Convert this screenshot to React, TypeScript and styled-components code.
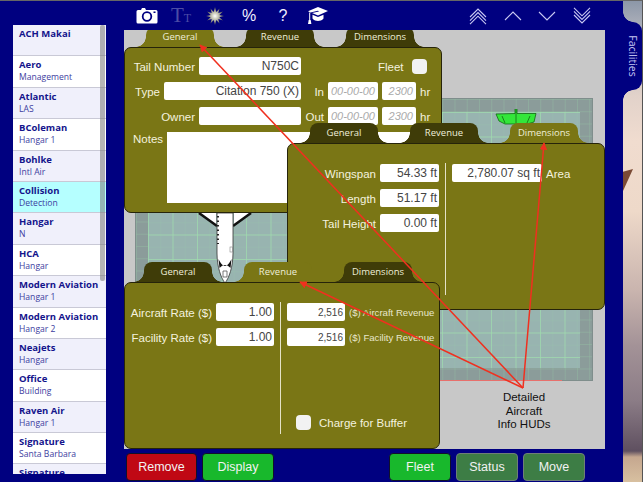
import React from "react";
import styled, { createGlobalStyle } from "styled-components";

const NAVY = "#000080";
const OLIVE = "#7a7615";
const DARK_TAB = "#3f3c08";

const GlobalStyle = createGlobalStyle`
  html, body {
    margin: 0;
    padding: 0;
    background: ${NAVY};
    overflow: hidden;
  }
  * {
    box-sizing: border-box;
  }
`;

interface IFacility {
  name: string;
  sub?: string;
  selected?: boolean;
}

const facilities: IFacility[] = [
  { name: "ACH Makai" },
  { name: "Aero", sub: "Management" },
  { name: "Atlantic", sub: "LAS" },
  { name: "BColeman", sub: "Hangar 1" },
  { name: "Bohlke", sub: "Intl Air" },
  { name: "Collision", sub: "Detection", selected: true },
  { name: "Hangar", sub: "N" },
  { name: "HCA", sub: "Hangar" },
  { name: "Modern Aviation", sub: "Hangar 1" },
  { name: "Modern Aviation", sub: "Hangar 2" },
  { name: "Neajets", sub: "Hangar" },
  { name: "Office", sub: "Building" },
  { name: "Raven Air", sub: "Hangar 1" },
  { name: "Signature", sub: "Santa Barbara" },
  { name: "Signature" },
];

const TAB_NAMES = ["General", "Revenue", "Dimensions"];

const Tabs = ({ active, left }: { active: string; left: number }): JSX.Element => (
  <TabRow $left={left}>
    {TAB_NAMES.map((name) => (
      <Tab key={name} $active={name === active}>
        {name}
      </Tab>
    ))}
  </TabRow>
);

const Chevrons = ({ count, up }: { count: number; up: boolean }): JSX.Element => (
  <svg width="18" height="18" viewBox="0 0 18 18" fill="none" stroke="#c9c9f2" strokeWidth="1.1">
    <g transform={up ? undefined : "matrix(1 0 0 -1 0 18)"}>
      {Array.from({ length: count }).map((_, i) => {
        const y = count === 1 ? 5 : 2 + i * 3.6;
        return <polyline key={i} points={`1,${y + 8} 9,${y} 17,${y + 8}`} />;
      })}
    </g>
  </svg>
);

const App = (): JSX.Element => {
  return (
    <Page>
      <GlobalStyle />
      <Main>
        <Sidebar>
          {facilities.map((f, i) => (
            <Item key={i} $odd={i % 2 === 1} $selected={!!f.selected}>
              <ItemName>{f.name}</ItemName>
              <ItemSub>{f.sub}</ItemSub>
            </Item>
          ))}
          <ScrollThumb />
        </Sidebar>

        <Content>
          <Toolbar>
            <ToolGroup>
              <ToolSlot>
                <svg width="22" height="17" viewBox="0 0 22 17">
                  <path
                    d="M2 3h3l1-2h3l1 2h10a1.500 1.500 0 0 1 1.500 1.500v10.500a1.500 1.500 0 0 1-1.500 1.500h-18a1.500 1.500 0 0 1-1.500-1.500v-10.500a1.500 1.500 0 0 1 1.500-1.500z"
                    fill="#fff"
                  />
                  <circle cx="11" cy="9.500" r="4.300" fill="none" stroke={NAVY} strokeWidth="1.800" />
                  <rect x="17.500" y="4.500" width="2" height="1.500" fill={NAVY} />
                </svg>
              </ToolSlot>
              <ToolSlot>
                <FontGlyph>
                  T<small>T</small>
                </FontGlyph>
              </ToolSlot>
              <ToolSlot>
                <svg width="18" height="18" viewBox="0 0 18 18">
                  <defs>
                    <radialGradient id="burst">
                      <stop offset="0" stopColor="#ffffff" />
                      <stop offset="0.3" stopColor="#d2d2c4" />
                      <stop offset="1" stopColor="#5c5a4c" />
                    </radialGradient>
                  </defs>
                  <polygon
                    fill="url(#burst)"
                    points="9,0 10.300,5 13.500,1.500 12.300,6 17,4.500 13.300,8 18,9 13.300,10.200 17,13.500 12.300,12 13.500,16.500 10.300,13 9,18 7.700,13 4.500,16.500 5.700,12 1,13.500 4.700,10.200 0,9 4.700,8 1,4.500 5.700,6 4.500,1.500 7.700,5"
                  />
                </svg>
              </ToolSlot>
              <ToolSlot>%</ToolSlot>
              <ToolSlot>?</ToolSlot>
              <ToolSlot>
                <svg width="21" height="19" viewBox="0 0 21 19" fill="#fff">
                  <polygon points="11,1 21,5 11,9.500 5,7 12,5.500 11,4.800 3.500,6.400 1,5.300" />
                  <path d="M5.500 8.700l5.500 2.400 5.500-2.400v3.800c-1.500 1.800-3.500 2.500-5.500 2.500s-4-0.700-5.500-2.500z" />
                  <rect x="2.200" y="6.500" width="1" height="7.500" />
                  <path d="M1.700 14h2l0.700 4h-3.400z" />
                </svg>
              </ToolSlot>
            </ToolGroup>
            <ToolGroup>
              <ToolSlot $wide>
                <Chevrons count={3} up />
              </ToolSlot>
              <ToolSlot $wide>
                <Chevrons count={1} up />
              </ToolSlot>
              <ToolSlot $wide>
                <Chevrons count={1} up={false} />
              </ToolSlot>
              <ToolSlot $wide>
                <Chevrons count={3} up={false} />
              </ToolSlot>
            </ToolGroup>
          </Toolbar>

          <Canvas>
            <Floor>
              <FloorInner />
              <FloorRedLine />
            </Floor>

            <WhitePlane width="70" height="75" viewBox="0 0 70 75">
              <polygon points="8,0 25,13 25,0" fill="#fff" />
              <polygon points="60,0 43,13 43,0" fill="#fff" />
              <path d="M8 0l18 13M60 0l-18 13" stroke="#111" strokeWidth="2.500" fill="none" />
              <path d="M26 0v40c0 14 4 25 8 30c4-5 8-16 8-30v-40z" fill="#fff" stroke="#333" strokeWidth="0.800" />
              <path d="M27 3v28" stroke="#111" strokeWidth="1.800" strokeDasharray="1.500 3" />
              <path d="M27.500 46c2 4 4 7 6.500 7s4.500-3 6.500-7l-1 9c-2-2-3.500-3-5.500-3s-3.500 1-5.500 3z" fill="#111" />
              <rect x="39" y="34" width="2.500" height="5" fill="none" stroke="#888" strokeWidth="0.600" />
              <path d="M32 58h4v6h-4z" fill="none" stroke="#555" strokeWidth="0.800" />
            </WhitePlane>

            <GreenPlane width="44" height="16" viewBox="0 0 44 16">
              <polygon
                points="1,5 20,4.500 20,0 22,0 22,4.500 41,4.500 39,13 32,15 10,15 4,12"
                fill="#33e63a"
                stroke="#126a12"
                strokeWidth="0.800"
              />
              <path d="M21 1v13M7 7l3 7M35 7l-3 7" stroke="#126a12" strokeWidth="0.800" />
            </GreenPlane>

            <Hud $left={0} $top={-3} $width={318}>
              <Tabs active="General" left={22} />
              <Panel $height={166} $column>
                <GeneralRow>
                  <LeftField>
                    <Label>Tail Number</Label>
                    <Input $width={102}>N750C</Input>
                  </LeftField>
                  <FleetField>
                    <Label>Fleet</Label>
                    <Check />
                  </FleetField>
                </GeneralRow>
                <GeneralRow>
                  <LeftField>
                    <Label>Type</Label>
                    <Input $width={137}>Citation 750 (X)</Input>
                  </LeftField>
                  <DateField>
                    <DateLabel>In</DateLabel>
                    <Input $width={50} $hint>
                      00-00-00
                    </Input>
                    <Input $width={34} $hint>
                      2300
                    </Input>
                    <Label>hr</Label>
                  </DateField>
                </GeneralRow>
                <GeneralRow>
                  <LeftField>
                    <Label>Owner</Label>
                    <Input $width={102} />
                  </LeftField>
                  <DateField>
                    <DateLabel>Out</DateLabel>
                    <Input $width={50} $hint>
                      00-00-00
                    </Input>
                    <Input $width={34} $hint>
                      2300
                    </Input>
                    <Label>hr</Label>
                  </DateField>
                </GeneralRow>
                <NotesRow>
                  <Label>Notes</Label>
                  <NotesBox />
                </NotesRow>
              </Panel>
            </Hud>

            <Hud $left={163} $top={93} $width={318}>
              <Tabs active="Dimensions" left={23} />
              <Panel $height={167}>
                <Column $width={151}>
                  <Field>
                    <Label>Wingspan</Label>
                    <Input $width={59}>54.33 ft</Input>
                  </Field>
                  <Field>
                    <Label>Length</Label>
                    <Input $width={59}>51.17 ft</Input>
                  </Field>
                  <Field>
                    <Label>Tail Height</Label>
                    <Input $width={59}>0.00 ft</Input>
                  </Field>
                </Column>
                <Divider />
                <Column $width={150}>
                  <RightField>
                    <Input $width={90}>2,780.07 sq ft</Input>
                    <Label>Area</Label>
                  </RightField>
                </Column>
              </Panel>
            </Hud>

            <Hud $left={0} $top={232} $width={316}>
              <Tabs active="Revenue" left={20} />
              <Panel $height={167}>
                <Column $width={149}>
                  <Field>
                    <Label>Aircraft Rate ($)</Label>
                    <Input $width={58}>1.00</Input>
                  </Field>
                  <Field>
                    <Label>Facility Rate ($)</Label>
                    <Input $width={58}>1.00</Input>
                  </Field>
                </Column>
                <Divider />
                <Column $width={150}>
                  <RightField>
                    <SmallInput $width={58}>2,516</SmallInput>
                    <SmallLabel>($) Aircraft Revenue</SmallLabel>
                  </RightField>
                  <RightField>
                    <SmallInput $width={58}>2,516</SmallInput>
                    <SmallLabel>($) Facility Revenue</SmallLabel>
                  </RightField>
                  <BufferField>
                    <Check />
                    <Label>Charge for Buffer</Label>
                  </BufferField>
                </Column>
              </Panel>
            </Hud>

            <Arrows width="481" height="419" viewBox="0 0 481 419">
              <defs>
                <marker id="head" markerWidth="5" markerHeight="5" refX="4.500" refY="2.500" orient="auto">
                  <polygon points="0,0 5,2.500 0,5" fill="#f0301f" />
                </marker>
              </defs>
              <line x1="399" y1="358" x2="76" y2="15" markerEnd="url(#head)" />
              <line x1="399" y1="358" x2="420" y2="113" markerEnd="url(#head)" />
              <line x1="399" y1="358" x2="176" y2="252" markerEnd="url(#head)" />
            </Arrows>

            <Caption>
              Detailed
              <br />
              Aircraft
              <br />
              Info HUDs
            </Caption>
          </Canvas>

          <ButtonBar>
            <ButtonGroup>
              <ActionButton $color="#c00814" $width={71}>
                Remove
              </ActionButton>
              <ActionButton $color="#18b82c" $width={72}>
                Display
              </ActionButton>
            </ButtonGroup>
            <ButtonGroup>
              <ActionButton $color="#18b82c" $width={62}>
                Fleet
              </ActionButton>
              <ActionButton $color="#3d7d45" $width={62} $muted>
                Status
              </ActionButton>
              <ActionButton $color="#3d7d45" $width={62} $muted>
                Move
              </ActionButton>
            </ButtonGroup>
          </ButtonBar>
        </Content>
      </Main>

      <PhotoStrip>
        <PlaneTail />
        <SideTab>
          <SideTabText>Facilities</SideTabText>
        </SideTab>
      </PhotoStrip>
    </Page>
  );
};

const Page = styled.div`
  display: flex;
  width: 643px;
  height: 482px;
  border-top: 1px solid #666;
  border-right: 1px solid #555;
  overflow: hidden;
  font-family: "Liberation Sans", Arial, sans-serif;
`;

const Main = styled.div`
  display: flex;
  width: 623px;
  height: 481px;
  padding-left: 13px;
  background-color: ${NAVY};
`;

const Sidebar = styled.div`
  position: relative;
  width: 93px;
  height: 449px;
  margin-top: 24px;
  margin-right: 18px;
  overflow: hidden;
`;

const Item = styled.div<{ $odd: boolean; $selected: boolean }>`
  height: 31.4px;
  padding: 2px 0 0 6px;
  border-bottom: 1px solid #c9c9d6;
  background-color: ${(p) => (p.$selected ? "#b5ffff" : p.$odd ? "#ffffff" : "#f0f0fb")};
`;

const ItemName = styled.div`
  height: 13px;
  font-family: "Open Sans", sans-serif;
  font-size: 9.5px;
  font-weight: 700;
  line-height: 14px;
  color: #14148c;
  white-space: nowrap;
`;

const ItemSub = styled.div`
  height: 12px;
  font-family: "Open Sans", sans-serif;
  font-size: 8.6px;
  line-height: 12px;
  color: #3c3ca0;
  white-space: nowrap;
`;

const ScrollThumb = styled.div`
  position: absolute;
  top: 0;
  right: 1px;
  width: 5px;
  height: 256px;
  border-radius: 2px;
  background-color: rgba(120, 120, 120, 0.55);
`;

const Content = styled.div`
  display: flex;
  flex-direction: column;
  width: 481px;
`;

const Toolbar = styled.div`
  display: flex;
  justify-content: space-between;
  height: 29px;
  padding: 0 6px;
`;

const ToolGroup = styled.div`
  display: flex;
  align-items: center;
`;

const ToolSlot = styled.div<{ $wide?: boolean }>`
  display: flex;
  align-items: center;
  justify-content: center;
  width: ${(p) => (p.$wide ? "34.5px" : "34px")};
  height: 29px;
  font-size: 16px;
  color: #f0f0ff;
`;

const FontGlyph = styled.span`
  font-family: "Liberation Serif", serif;
  font-size: 21px;
  line-height: 1;
  color: #4c4ca6;

  small {
    font-size: 12px;
  }
`;

const Canvas = styled.div`
  position: relative;
  height: 419px;
  overflow: hidden;
  background-color: #c8c8c8;
`;

const Floor = styled.div`
  position: absolute;
  left: 11px;
  top: 68px;
  width: 458px;
  height: 283px;
  border: 1px solid #7f8e8c;
  background-color: #8b9c9a;
  background-image: linear-gradient(to right, rgba(150, 200, 165, 0.35) 1px, transparent 1px),
    linear-gradient(to bottom, rgba(150, 200, 165, 0.35) 1px, transparent 1px);
  background-size: 12.25px 12.25px;
`;

const FloorInner = styled.div`
  position: absolute;
  left: 12px;
  top: 13px;
  width: 432px;
  height: 256px;
  background-color: #98b4b0;
  background-image: linear-gradient(to right, rgba(160, 220, 175, 0.7) 1px, transparent 1px),
    linear-gradient(to bottom, rgba(160, 220, 175, 0.7) 1px, transparent 1px),
    linear-gradient(to right, rgba(150, 200, 170, 0.2) 1px, transparent 1px),
    linear-gradient(to bottom, rgba(150, 200, 170, 0.2) 1px, transparent 1px);
  background-size: 24.5px 24.5px, 24.5px 24.5px, 12.25px 12.25px, 12.25px 12.25px;
`;

const FloorRedLine = styled.div`
  position: absolute;
  left: -1px;
  bottom: -1px;
  width: 427px;
  height: 1px;
  background-color: #e8706c;
`;

const WhitePlane = styled.svg`
  position: absolute;
  left: 67px;
  top: 183px;
`;

const GreenPlane = styled.svg`
  position: absolute;
  left: 371px;
  top: 79px;
`;

const Hud = styled.div<{ $left: number; $top: number; $width: number }>`
  position: absolute;
  left: ${(p) => p.$left}px;
  top: ${(p) => p.$top}px;
  width: ${(p) => p.$width}px;
`;

const TabRow = styled.div<{ $left: number }>`
  display: flex;
  gap: 32px;
  height: 20px;
  padding-left: ${(p) => p.$left}px;
`;

const Tab = styled.div<{ $active: boolean }>`
  --tab: ${(p) => (p.$active ? OLIVE : DARK_TAB)};
  position: relative;
  width: 68px;
  height: 20px;
  padding-top: 2px;
  border-radius: 8px 8px 0 0;
  background-color: var(--tab);
  font-family: "Open Sans", sans-serif;
  font-size: 9.5px;
  line-height: 16px;
  text-align: center;
  color: #eeeed8;

  &::before,
  &::after {
    content: "";
    position: absolute;
    bottom: 0;
    width: 10px;
    height: 10px;
  }

  &::before {
    left: -10px;
    background: radial-gradient(circle at 0 0, transparent 9.5px, var(--tab) 10px);
  }

  &::after {
    right: -10px;
    background: radial-gradient(circle at 100% 0, transparent 9.5px, var(--tab) 10px);
  }
`;

const Panel = styled.div<{ $height: number; $column?: boolean }>`
  display: flex;
  flex-direction: ${(p) => (p.$column ? "column" : "row")};
  align-items: flex-start;
  gap: ${(p) => (p.$column ? "7px" : "6px")};
  height: ${(p) => p.$height}px;
  padding-top: ${(p) => (p.$column ? "9px" : "19px")};
  border: 1px solid #26240a;
  border-radius: 7px;
  background-color: ${OLIVE};
`;

const GeneralRow = styled.div`
  display: flex;
  align-items: center;
  height: 18px;
`;

const LeftField = styled.div`
  display: flex;
  align-items: center;
  justify-content: flex-end;
  gap: 4px;
  width: 176px;
`;

const FleetField = styled.div`
  display: flex;
  align-items: center;
  gap: 8px;
  margin-left: 77px;
`;

const DateField = styled.div`
  display: flex;
  align-items: center;
  gap: 4px;
  margin-left: 1px;
`;

const DateLabel = styled.span`
  width: 22px;
  padding-top: 1px;
  font-size: 11.5px;
  text-align: right;
  color: #f4f2df;
`;

const NotesRow = styled.div`
  display: flex;
  gap: 4px;
  padding-left: 8px;
`;

const NotesBox = styled.div`
  width: 252px;
  height: 71px;
  background-color: #fff;
`;

const Column = styled.div<{ $width: number }>`
  display: flex;
  flex-direction: column;
  gap: 7px;
  width: ${(p) => p.$width}px;
  height: 132px;
  padding-top: 1px;
`;

const Field = styled.div`
  display: flex;
  align-items: center;
  justify-content: flex-end;
  gap: 4px;
  height: 18px;
`;

const RightField = styled.div`
  display: flex;
  align-items: center;
  gap: 4px;
  height: 18px;
`;

const BufferField = styled.div`
  display: flex;
  align-items: center;
  gap: 8px;
  margin-top: auto;
  margin-bottom: 4px;
  padding-left: 9px;
`;

const Divider = styled.div`
  width: 1px;
  height: 132px;
  background-color: #e4e2c8;
`;

const Label = styled.span`
  padding-top: 1px;
  font-size: 11.5px;
  white-space: nowrap;
  color: #f4f2df;
`;

const SmallLabel = styled.span`
  padding-top: 1px;
  font-size: 9.6px;
  white-space: nowrap;
  color: #e8e6cc;
`;

const Input = styled.div<{ $width: number; $hint?: boolean }>`
  flex-shrink: 0;
  width: ${(p) => p.$width}px;
  height: 18px;
  padding-right: ${(p) => (p.$hint ? "3px" : "2px")};
  border-radius: 2px;
  background-color: #fff;
  font-size: ${(p) => (p.$hint ? "11px" : "12px")};
  font-style: ${(p) => (p.$hint ? "italic" : "normal")};
  line-height: 19px;
  text-align: right;
  white-space: nowrap;
  color: ${(p) => (p.$hint ? "#aaa" : "#444")};
`;

const SmallInput = styled(Input)`
  font-size: 10px;
`;

const Check = styled.div`
  width: 15px;
  height: 15px;
  border-radius: 4px;
  background-color: #f2f2f2;
`;

const Arrows = styled.svg`
  position: absolute;
  left: 0;
  top: 0;

  line {
    stroke: #f0301f;
    stroke-width: 1.5;
  }
`;

const Caption = styled.div`
  position: absolute;
  left: 360px;
  top: 361px;
  width: 80px;
  font-size: 11.5px;
  line-height: 13.500px;
  text-align: center;
  color: #111;
`;

const ButtonBar = styled.div`
  display: flex;
  justify-content: space-between;
  padding: 4px 20px 0 2px;
`;

const ButtonGroup = styled.div`
  display: flex;
  gap: 5px;
`;

const ActionButton = styled.div<{ $color: string; $width: number; $muted?: boolean }>`
  width: ${(p) => p.$width}px;
  height: 28px;
  border: 1px solid ${(p) => (p.$muted ? "#6f7f78" : "#10102a")};
  border-radius: 4px;
  background-color: ${(p) => p.$color};
  font-size: 12.500px;
  line-height: 26px;
  text-align: center;
  color: #f2f2f2;
`;

const PhotoStrip = styled.div`
  position: relative;
  width: 19px;
  height: 481px;
  background: linear-gradient(
    to bottom,
    #8c97a8 0,
    #a9adb8 22px,
    #e2d2ca 95px,
    #f0dccf 140px,
    #eed9c9 210px,
    #c9b4ae 290px,
    #a39297 345px,
    #8b7c86 400px,
    #5f5060 450px,
    #c5a78f 456px,
    #d8c0a0 481px
  );
`;

const PlaneTail = styled.div`
  position: absolute;
  left: 0;
  top: 168px;
  width: 10px;
  height: 22px;
  background-color: #7a4a35;
  clip-path: polygon(0 12%, 100% 0, 0 100%);
`;

const SideTab = styled.div`
  position: absolute;
  left: 0;
  top: 21px;
  display: flex;
  align-items: center;
  justify-content: center;
  width: 19px;
  height: 68px;
  border-radius: 0 9px 9px 0;
  background-color: ${NAVY};

  &::before,
  &::after {
    content: "";
    position: absolute;
    left: 0;
    width: 10px;
    height: 10px;
  }

  &::before {
    top: -10px;
    background: radial-gradient(circle at 100% 0, transparent 9.500px, ${NAVY} 10px);
  }

  &::after {
    bottom: -10px;
    background: radial-gradient(circle at 100% 100%, transparent 9.500px, ${NAVY} 10px);
  }
`;

const SideTabText = styled.span`
  font-family: "Open Sans", sans-serif;
  font-size: 10.5px;
  white-space: nowrap;
  color: #c8c8f4;
  transform: rotate(90deg);
`;

export default App;
